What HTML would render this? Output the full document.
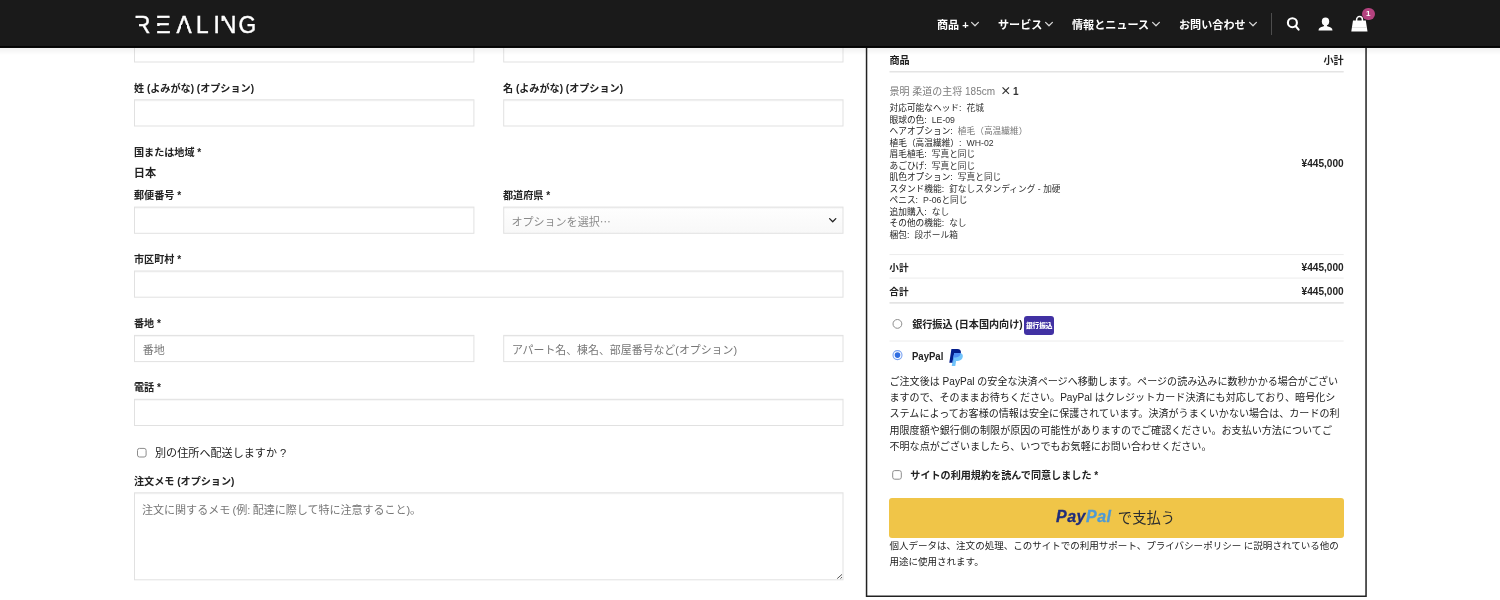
<!DOCTYPE html>
<html lang="ja">
<head>
<meta charset="utf-8">
<title>購入手続き - REALING</title>
<style>
*{box-sizing:border-box;margin:0;padding:0}
html,body{width:1500px;height:600px;overflow:hidden;background:#fff}
body{font-family:"Liberation Sans","Noto Sans CJK JP",sans-serif;color:#222;position:relative;-webkit-font-smoothing:antialiased}
#page{position:absolute;left:0;top:0;width:1500px;height:600px;overflow:hidden;will-change:transform}
.abs{position:absolute;white-space:nowrap}
/* header */
#hdr{position:absolute;left:0;top:0;width:1500px;height:46px;background:#1a1a1a;z-index:10}
#hdrline{position:absolute;left:0;top:45.6px;width:1500px;height:2px;background:linear-gradient(#0a0a0a,#000 40%,#000 70%,#3a3a3a);z-index:11}
#hdrsh{position:absolute;left:0;top:48px;width:1500px;height:7px;background:linear-gradient(rgba(0,0,0,.055),rgba(0,0,0,0));z-index:9}
#logo{position:absolute;left:0;top:0;width:300px;height:47px;font-size:24.4px;line-height:28px;color:#fff;font-weight:400}
#logo i{position:absolute;background:#1a1a1a;z-index:3}
#lt{position:absolute;left:133.5px;top:11.1px;font-weight:400;white-space:nowrap;font-kerning:none;-webkit-text-stroke:.45px #fff;transform-origin:0 0;transform:scaleX(.93)}
.nav{position:absolute;top:17px;height:16px;line-height:16px;font-size:11.1px;font-weight:700;color:#fff;white-space:nowrap}
.ico{position:absolute}
#divider{position:absolute;left:1271px;top:13px;width:1px;height:22px;background:#4d4d4d}
#badge{position:absolute;left:1361.9px;top:7.5px;width:12.8px;height:12.8px;border-radius:50%;background:#b4427f;color:#fff;font-size:8px;font-weight:700;line-height:12.8px;text-align:center;z-index:2}
/* form */
.lbl{position:absolute;font-size:10.1px;font-weight:700;line-height:14px;height:14px;color:#222;white-space:nowrap}
.inp{position:absolute;height:27px;border:1px solid transparent;font-size:11.05px;line-height:27px;color:#8a8a8a;padding-left:7.7px;white-space:nowrap;overflow:hidden}
/* order box */
.r{text-align:right}
.b{font-weight:700}
#meta b{font-weight:400;color:#222;margin-right:2.7px}
</style>
</head>
<body>
<div id="page">

<div id="hdr">
  <div id="logo"><b id="lt"><span style="letter-spacing:5.50px">R</span><span style="letter-spacing:6.31px">E</span><span style="letter-spacing:4.69px">A</span><span style="letter-spacing:5.25px">L</span><span style="letter-spacing:0.21px">I</span><span style="letter-spacing:2.27px">N</span><span>G</span></b><i style="left:133px;top:18.4px;width:5.6px;height:16px"></i><i style="left:154.5px;top:18.4px;width:5px;height:4.4px"></i><i style="left:154.5px;top:26.2px;width:5px;height:4.6px"></i><i style="left:181px;top:25px;width:5.6px;height:4.2px"></i><i style="left:219.5px;top:21px;width:5px;height:13px"></i></div>
  <div class="nav" style="left:937px">商品 +</div>
  <div class="nav" style="left:998px">サービス</div>
  <div class="nav" style="left:1072px">情報とニュース</div>
  <div class="nav" style="left:1179px">お問い合わせ</div>
  <svg class="ico" style="left:970px;top:20px" width="10" height="8" viewBox="0 0 10 8"><polyline points="1.6,2.4 5,5.8 8.4,2.4" fill="none" stroke="#d8d8d8" stroke-width="1.25" stroke-linecap="round" stroke-linejoin="round"/></svg>
  <svg class="ico" style="left:1044px;top:20px" width="10" height="8" viewBox="0 0 10 8"><polyline points="1.6,2.4 5,5.8 8.4,2.4" fill="none" stroke="#d8d8d8" stroke-width="1.25" stroke-linecap="round" stroke-linejoin="round"/></svg>
  <svg class="ico" style="left:1151px;top:20px" width="10" height="8" viewBox="0 0 10 8"><polyline points="1.6,2.4 5,5.8 8.4,2.4" fill="none" stroke="#d8d8d8" stroke-width="1.25" stroke-linecap="round" stroke-linejoin="round"/></svg>
  <svg class="ico" style="left:1247.5px;top:20px" width="10" height="8" viewBox="0 0 10 8"><polyline points="1.6,2.4 5,5.8 8.4,2.4" fill="none" stroke="#d8d8d8" stroke-width="1.25" stroke-linecap="round" stroke-linejoin="round"/></svg>
  <svg class="ico" style="left:1284px;top:14px" width="18" height="18" viewBox="0 0 18 18"><circle cx="8.4" cy="8.7" r="4.5" fill="none" stroke="#fff" stroke-width="2.1"/><line x1="11.6" y1="12" x2="14.6" y2="15.6" stroke="#fff" stroke-width="2.1" stroke-linecap="round"/></svg>
  <svg class="ico" style="left:1316px;top:14px" width="20" height="18" viewBox="0 0 20 18"><ellipse cx="9.5" cy="7.5" rx="3.7" ry="4" fill="#fff"/><path d="M2.5 16.4c0-2.3 2.2-3.2 4.6-3.8 1-.3 1.1-1.3.9-2h3c-.2.7-.1 1.700.9 2 2.400.6 4.600 1.500 4.600 3.800z" fill="#fff"/></svg>
  <svg class="ico" style="left:1349px;top:13px" width="22" height="20" viewBox="0 0 22 20"><path d="M7.6 8.200v-1.700a2.900 2.900 0 0 1 5.800 0v1.700" fill="none" stroke="#fff" stroke-width="1.5"/><path d="M4 7.600h12.800l1.700 10.900h-16.200z" fill="#fff"/><line x1="3" y1="14.500" x2="18" y2="14.500" stroke="#dcdcdc" stroke-width=".8"/></svg>
  <div id="divider"></div>
  <div id="badge">1</div>
</div>

<div id="hdrline"></div><div id="hdrsh"></div>
<!-- left form -->
<svg class="ico" style="left:0;top:0;z-index:0" width="1500" height="600" viewBox="0 0 1500 600"><defs><linearGradient id="sg" x1="0" y1="0" x2="0" y2="1"><stop offset="0" stop-color="#fefefe"/><stop offset="1" stop-color="#f8f8f8"/></linearGradient></defs>
<rect x="134.5" y="35.8" width="339.4" height="26.2" fill="#fff" stroke="#e1e1e1" stroke-width="1"/><line x1="135" y1="36.8" x2="473" y2="36.8" stroke="#000" stroke-opacity=".045"/>
<rect x="503.7" y="35.8" width="339.3" height="26.2" fill="#fff" stroke="#e1e1e1" stroke-width="1"/><line x1="504.2" y1="36.8" x2="842.5" y2="36.8" stroke="#000" stroke-opacity=".045"/>
<rect x="134.5" y="99.8" width="339.4" height="26.2" fill="#fff" stroke="#e1e1e1" stroke-width="1"/><line x1="135" y1="100.8" x2="473" y2="100.8" stroke="#000" stroke-opacity=".045"/>
<rect x="503.7" y="99.8" width="339.3" height="26.2" fill="#fff" stroke="#e1e1e1" stroke-width="1"/><line x1="504.2" y1="100.8" x2="842.5" y2="100.8" stroke="#000" stroke-opacity=".045"/>
<rect x="134.5" y="207.1" width="339.4" height="26.2" fill="#fff" stroke="#e1e1e1" stroke-width="1"/><line x1="135" y1="208.1" x2="473" y2="208.1" stroke="#000" stroke-opacity=".045"/>
<rect x="503.7" y="207.1" width="339.3" height="26.2" fill="url(#sg)" stroke="#e1e1e1" stroke-width="1"/><line x1="504.2" y1="208.1" x2="842.5" y2="208.1" stroke="#000" stroke-opacity=".045"/>
<rect x="134.5" y="271.0" width="708.5" height="26.2" fill="#fff" stroke="#e1e1e1" stroke-width="1"/><line x1="135" y1="272.0" x2="842.5" y2="272.0" stroke="#000" stroke-opacity=".045"/>
<rect x="134.5" y="335.4" width="339.4" height="26.2" fill="#fff" stroke="#e1e1e1" stroke-width="1"/><line x1="135" y1="336.4" x2="473" y2="336.4" stroke="#000" stroke-opacity=".045"/>
<rect x="503.7" y="335.4" width="339.3" height="26.2" fill="#fff" stroke="#e1e1e1" stroke-width="1"/><line x1="504.2" y1="336.4" x2="842.5" y2="336.4" stroke="#000" stroke-opacity=".045"/>
<rect x="134.5" y="399.3" width="708.5" height="26.2" fill="#fff" stroke="#e1e1e1" stroke-width="1"/><line x1="135" y1="400.3" x2="842.5" y2="400.3" stroke="#000" stroke-opacity=".045"/>
<rect x="134.5" y="492.8" width="708.5" height="87.0" fill="#fff" stroke="#e1e1e1" stroke-width="1"/><line x1="135" y1="493.8" x2="842.5" y2="493.8" stroke="#000" stroke-opacity=".045"/>
<rect x="866.55" y="30" width="499.5" height="566.25" fill="none" stroke="#222" stroke-width="1.5"/>
<line x1="889.5" y1="71.7" x2="1343.7" y2="71.7" stroke="#e4e4e4" stroke-width="1.6"/>
<line x1="889.5" y1="254.6" x2="1343.7" y2="254.6" stroke="#ececec" stroke-width="1"/>
<line x1="889.5" y1="278.1" x2="1343.7" y2="278.1" stroke="#ececec" stroke-width="1"/>
<line x1="889.5" y1="302.9" x2="1343.7" y2="302.9" stroke="#e4e4e4" stroke-width="1.6"/>
<line x1="889.5" y1="341" x2="1343.7" y2="341" stroke="#ececec" stroke-width="1"/>
<circle cx="897.4" cy="323.9" r="4.4" fill="#fff" stroke="#8c8c8c" stroke-width="1"/>
<circle cx="897.5" cy="355.1" r="4.5" fill="#fff" stroke="#7ba3f1" stroke-width="1.1"/><circle cx="897.5" cy="355.1" r="2.8" fill="#2f6de1"/>
<rect x="137.5" y="448.4" width="8.6" height="8.6" rx="2" fill="#fff" stroke="#8c8c8c" stroke-width="1"/>
<rect x="892.7" y="470.6" width="8.6" height="8.6" rx="2" fill="#fff" stroke="#8c8c8c" stroke-width="1"/>
<polyline points="829.6,218.600 832.7,221.700 835.8,218.600" fill="none" stroke="#222" stroke-width="1.3" stroke-linecap="round" stroke-linejoin="round"/>
<path d="M837.2 578.600L842 574.400M840.400 578.700L842 577.100" stroke="#555" stroke-width="1" fill="none"/>
</svg>
<div class="inp" style="left:134px;top:35px;width:340px"></div>
<div class="inp" style="left:503px;top:35px;width:340px"></div>

<div class="lbl" style="left:134px;top:81.5px">姓 (よみがな) (オプション)</div>
<div class="lbl" style="left:503px;top:81.5px">名 (よみがな) (オプション)</div>
<div class="inp" style="left:134px;top:99.5px;width:340px"></div>
<div class="inp" style="left:503px;top:99.5px;width:340px"></div>

<div class="lbl" style="left:134px;top:145.8px">国または地域 *</div>
<div class="abs b" style="left:133.7px;top:166.2px;font-size:11.2px;line-height:15px">日本</div>

<div class="lbl" style="left:134px;top:189px">郵便番号 *</div>
<div class="lbl" style="left:503px;top:189px">都道府県 *</div>
<div class="inp" style="left:134px;top:206.5px;width:340px"></div>
<div class="inp" id="sel" style="left:502.7px;top:207.3px;width:340px">オプションを選択<span style="font-family:'Noto Sans CJK JP',sans-serif">…</span></div>

<div class="lbl" style="left:134px;top:253px">市区町村 *</div>
<div class="inp" style="left:134px;top:270.5px;width:709.5px"></div>

<div class="lbl" style="left:134px;top:317px">番地 *</div>
<div class="inp" style="left:134px;top:335.6px;width:340px;color:#777">番地</div>
<div class="inp" style="left:503.2px;top:335.6px;width:340px;font-size:10.92px;color:#777">アパート名、棟名、部屋番号など(オプション)</div>

<div class="lbl" style="left:134px;top:381px">電話 *</div>
<div class="inp" style="left:134px;top:399px;width:709.5px"></div>

<div class="abs" style="left:155px;top:445px;font-size:11.1px;line-height:16px">別の住所へ配送しますか ?</div>

<div class="lbl" style="left:134px;top:474.5px">注文メモ (オプション)</div>
<div class="inp" style="left:134px;top:492px;width:709.5px;height:88px;line-height:16px;padding-top:9px;margin-left:-.6px;word-spacing:-.6px;letter-spacing:-.04px;color:#777">注文に関するメモ (例: 配達に際して特に注意すること)。</div>

<!-- order box -->
<div class="lbl" style="left:889.5px;top:54px">商品</div>
<div class="lbl r" style="left:1243.7px;width:100px;top:54px">小計</div>

<div class="abs" style="left:889.5px;top:83.5px;font-size:10px;line-height:15px;color:#7c7c7c">景明 柔道の主将 185cm <span class="b" style="color:#333;margin-left:2.4px;word-spacing:-1.1px"><span style="font-family:'Noto Sans CJK JP',sans-serif;font-size:11px;line-height:10px;position:relative;top:.9px">×</span> 1</span></div>
<div id="meta" class="abs" style="left:889.5px;top:103.45px;font-size:8.7px;line-height:11.5px;color:#333"><b>対応可能なヘッド:</b> 花城<br><b>眼球の色:</b> LE-09<br><b>ヘアオプション:</b> <span style="color:#777">植毛（高温繊維）</span><br><b>植毛（高温繊維）:</b> WH-02<br><b>眉毛植毛:</b> 写真と同じ<br><b>あごひげ:</b> 写真と同じ<br><b>肌色オプション:</b> 写真と同じ<br><b>スタンド機能:</b> 釘なしスタンディング - 加硬<br><b>ペニス:</b> P-06と同じ<br><b>追加購入:</b> なし<br><b>その他の機能:</b> なし<br><b>梱包:</b> 段ボール箱</div>
<div class="lbl r" style="left:1243.7px;width:100px;top:157px">¥445,000</div>

<div class="lbl" style="left:889.3px;top:260.5px;font-size:9.6px">小計</div>
<div class="lbl r" style="left:1243.7px;width:100px;top:260.7px">¥445,000</div>
<div class="lbl" style="left:889.3px;top:284.6px;font-size:9.6px">合計</div>
<div class="lbl r" style="left:1243.7px;width:100px;top:284.6px">¥445,000</div>

<div class="lbl" style="left:912.2px;top:317.8px">銀行振込 (日本国内向け)</div>
<div id="bank" class="abs" style="left:1024.4px;top:316.2px;width:29.6px;height:19.2px;border-radius:3px;background:#4131a3;color:#fff;font-size:6.7px;font-weight:900;line-height:19.2px;text-align:center;letter-spacing:-.1px">銀行振込</div>

<div class="lbl" style="left:912.3px;top:348.6px;font-size:10.8px;transform:scaleX(.885);transform-origin:0 50%">PayPal</div>

<svg class="ico" style="left:947.5px;top:348px" width="17" height="19" viewBox="0 0 17 19"><defs><clipPath id="cp"><path d="M6.200 5h5.200c2.500 0 3.800 1.500 3.400 3.800c-.45 2.600-2.300 4.100-4.900 4.100h-1.800l-.8 5h-3.600z"/></clipPath></defs><path d="M3.400 1h5.900c2.700 0 4 1.600 3.600 4.100c-.45 2.700-2.400 4.300-5.100 4.300h-1.900l-.85 5.300h-3.750z" fill="#021c8b"/><path d="M6.200 5h5.200c2.500 0 3.800 1.500 3.400 3.800c-.45 2.600-2.300 4.100-4.900 4.100h-1.800l-.8 5h-3.600z" fill="#72c4fa"/><path d="M3.400 1h5.900c2.700 0 4 1.600 3.600 4.100c-.45 2.700-2.400 4.300-5.100 4.300h-1.900l-.85 5.300h-3.750z" fill="#4f8ff6" clip-path="url(#cp)"/></svg>

<div id="desc" class="abs" style="left:889.5px;top:374px;font-size:10.07px;line-height:16.2px;color:#222">ご注文後は PayPal の安全な決済ページへ移動します。ページの読み込みに数秒かかる場合がござい<br>ますので、そのままお待ちください。PayPal はクレジットカード決済にも対応しており、暗号化シ<br>ステムによってお客様の情報は安全に保護されています。決済がうまくいかない場合は、カードの利<br>用限度額や銀行側の制限が原因の可能性がありますのでご確認ください。お支払い方法についてご<br>不明な点がございましたら、いつでもお気軽にお問い合わせください。</div>

<div class="lbl" style="left:910.3px;top:469.2px">サイトの利用規約を読んで同意しました *</div>

<div id="ppbtn" style="position:absolute;left:889.3px;top:498px;width:454.4px;height:40px;border-radius:3px;background:#f0c548"><div class="abs" id="pplogo" style="left:166.7px;top:10px;font-size:16px;line-height:18px"><span style="font-weight:700;font-style:italic;letter-spacing:.5px;-webkit-text-stroke:.3px currentColor"><span style="color:#1f2d7b">Pay</span><span style="color:#4d9ad6">Pal</span></span><span id="pptxt" style="font-size:14.3px;color:#2c2e2f;margin-left:6.4px;position:relative;top:.9px">で支払う</span></div></div>

<div id="priv" class="abs" style="left:889.5px;top:538px;font-size:9.52px;line-height:16.4px;color:#222">個人データは、注文の処理、このサイトでの利用サポート、プライバシーポリシー に説明されている他の<br>用途に使用されます。</div>

</div>
</body>
</html>
